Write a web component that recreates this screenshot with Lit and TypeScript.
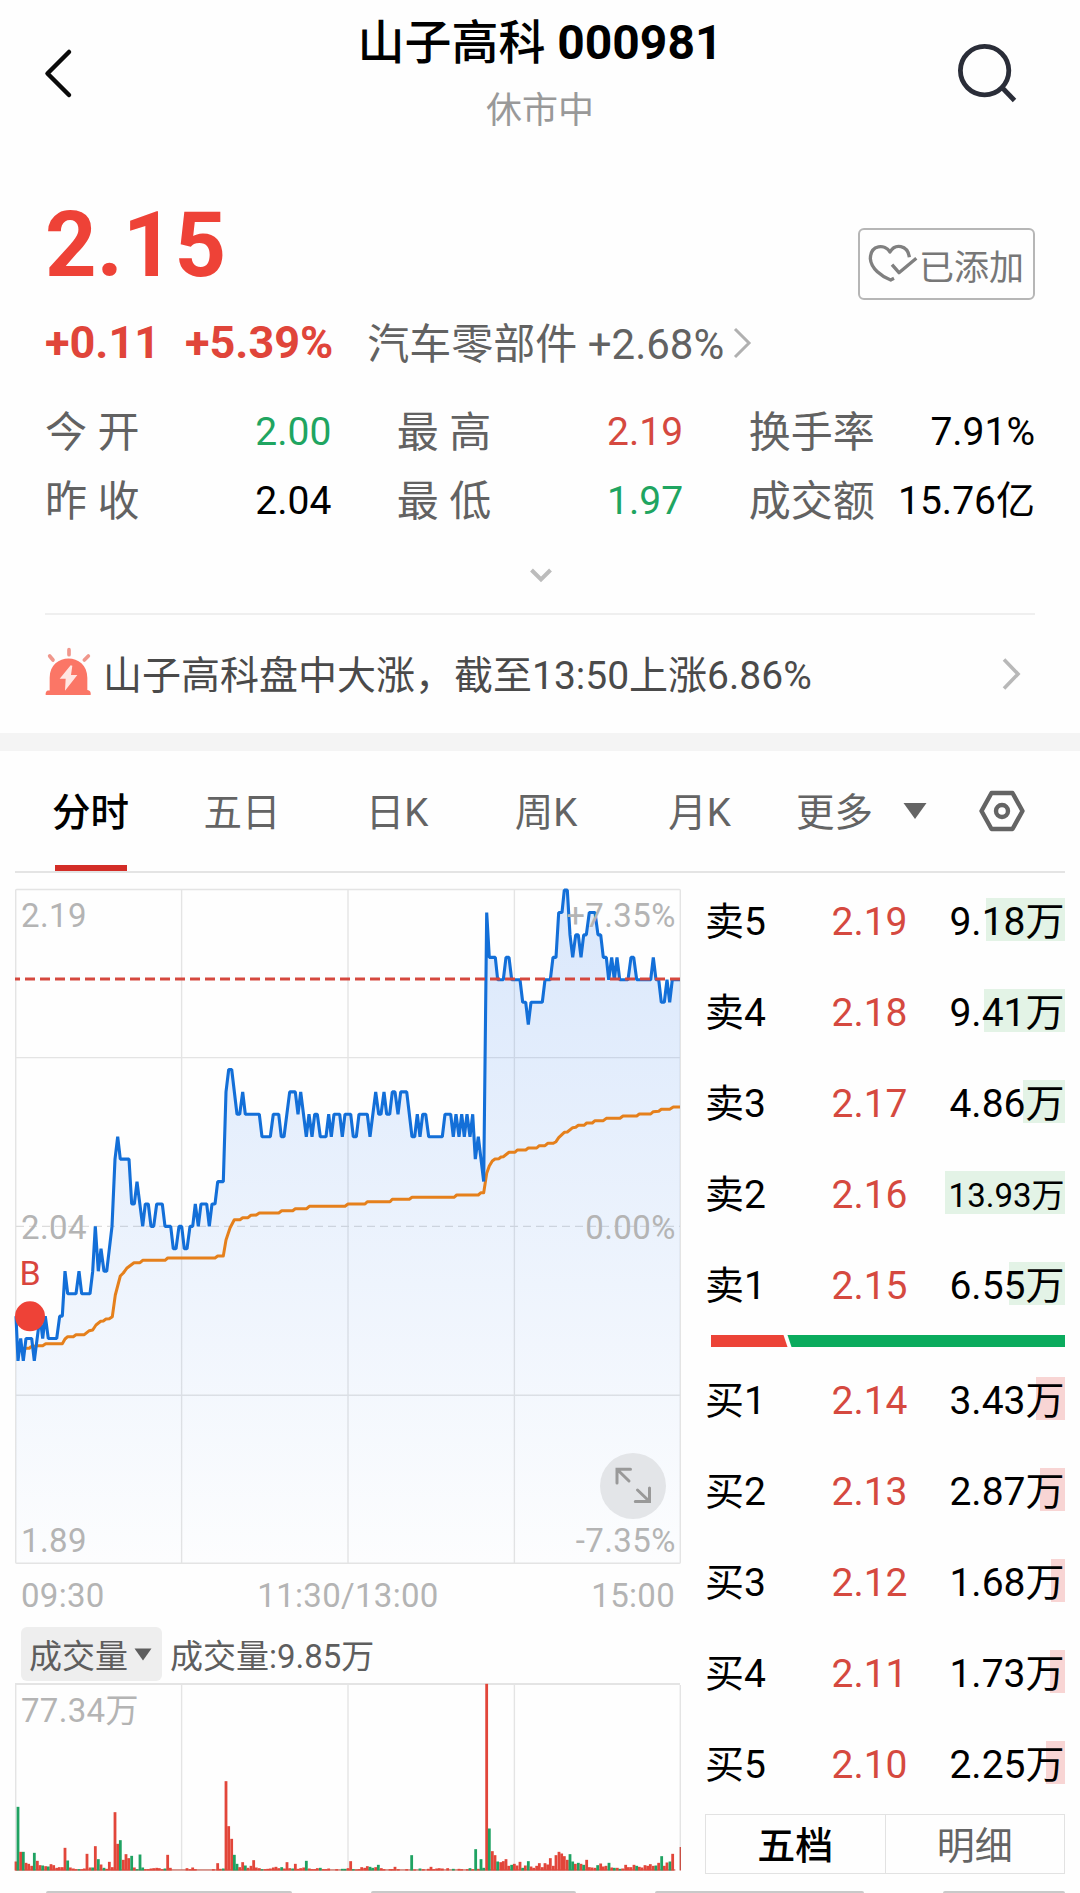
import { LitElement, html, svg, css } from "lit";
import { customElement, property } from "lit/decorators.js";

const FONT = css`Roboto, "Noto Sans CJK SC", sans-serif`;

/* Price track: [offset, price in cents]. One minute is 8.3 offset units. */
const PRICE: number[][] = [
  [48, 200], [54, 198], [62, 199], [70, 198], [78, 199], [95, 199], [103, 198], [120, 200], [128, 199], [136, 200],
  [145, 199], [170, 199], [179, 200], [187, 200], [195, 202], [203, 201], [228, 201], [237, 202], [245, 201],
  [270, 201], [278, 202], [286, 204], [295, 202], [303, 203], [312, 202], [320, 202], [336, 204], [345, 207],
  [353, 208], [361, 207], [387, 207], [395, 205], [403, 205], [411, 206], [428, 204], [436, 205], [445, 205],
  [453, 204], [461, 204], [470, 205], [487, 205], [495, 204], [512, 204], [520, 203], [528, 203], [537, 204],
  [545, 204], [553, 203], [561, 203], [570, 204], [578, 204], [586, 205], [595, 204], [603, 205], [620, 205],
  [628, 204], [636, 205], [645, 205], [653, 206], [670, 206], [678, 210], [686, 211], [695, 211], [711, 209],
  [719, 209], [728, 210], [736, 209], [778, 209], [786, 208], [811, 208], [820, 209], [836, 209], [844, 208],
  [852, 208], [869, 210], [886, 210], [894, 209], [902, 210], [919, 208], [927, 209], [936, 208], [944, 209],
  [952, 209], [961, 208], [978, 208], [986, 209], [994, 208], [1002, 209], [1019, 209], [1027, 208], [1035, 209],
  [1052, 209], [1060, 208], [1069, 208], [1077, 209], [1102, 209], [1110, 208], [1127, 210], [1136, 209],
  [1143, 209], [1152, 210], [1160, 209], [1169, 209], [1177, 210], [1185, 210], [1194, 209], [1202, 210],
  [1220, 210], [1236, 208], [1244, 208], [1252, 209], [1260, 208], [1268, 209], [1277, 209], [1286, 208],
  [1327, 208], [1335, 209], [1352, 209], [1360, 208], [1368, 209], [1377, 208], [1385, 209], [1393, 208],
  [1401, 209], [1410, 208], [1418, 209], [1426, 207], [1435, 208], [1443, 207], [1451, 206], [1460, 218],
  [1468, 216], [1486, 216], [1493, 215], [1510, 215], [1518, 216], [1527, 216], [1535, 215], [1560, 215],
  [1568, 214], [1577, 214], [1585, 213], [1593, 214], [1627, 214], [1635, 215], [1651, 215], [1659, 216],
  [1668, 216], [1676, 218], [1686, 218], [1693, 219], [1702, 219], [1710, 217], [1718, 216], [1727, 217],
  [1735, 217], [1743, 216], [1751, 217], [1759, 217], [1768, 218], [1785, 218], [1794, 217], [1802, 217],
  [1810, 216], [1819, 216], [1826, 215], [1835, 216], [1843, 215], [1851, 216], [1859, 215], [1884, 215],
  [1893, 216], [1901, 216], [1910, 215], [1952, 215], [1960, 216], [1968, 215], [1976, 215], [1984, 214],
  [1993, 214], [2001, 215], [2009, 214], [2017, 215], [2040, 215],
];

/* Average price track: [offset, depth], both in thirds of a pixel. */
const AVERAGE: number[][] = [
  [60, 1410], [78, 1405], [88, 1405], [93, 1400], [112, 1397], [128, 1397], [137, 1391], [187, 1391], [195, 1377], [203, 1370],
  [220, 1370], [228, 1364], [253, 1364], [268, 1352], [278, 1350], [288, 1335], [302, 1324], [310, 1323],
  [318, 1317], [328, 1316], [337, 1310], [346, 1245], [361, 1188], [370, 1179], [380, 1165], [402, 1148],
  [420, 1148], [428, 1141], [495, 1141], [503, 1134], [645, 1134], [653, 1128], [670, 1128], [678, 1080],
  [690, 1044], [703, 1019], [720, 1019], [728, 1013], [744, 1013], [752, 1006], [769, 1005], [778, 999],
  [836, 999], [845, 992], [878, 992], [886, 986], [920, 986], [928, 979], [1035, 979], [1044, 972], [1095, 972],
  [1102, 965], [1170, 965], [1177, 958], [1228, 958], [1236, 952], [1362, 952], [1370, 945], [1435, 945],
  [1443, 938], [1451, 938], [1460, 880], [1468, 858], [1477, 843], [1485, 837], [1497, 836], [1503, 831],
  [1510, 830], [1527, 817], [1545, 817], [1552, 810], [1577, 810], [1585, 804], [1610, 804], [1618, 797],
  [1635, 797], [1643, 790], [1660, 790], [1668, 785], [1676, 773], [1693, 757], [1702, 756], [1718, 743],
  [1727, 742], [1735, 736], [1752, 736], [1760, 729], [1777, 729], [1785, 722], [1810, 722], [1819, 715],
  [1860, 715], [1869, 708], [1910, 708], [1918, 702], [1952, 702], [1960, 695], [1976, 694], [1984, 688],
  [2009, 688], [2020, 681], [2040, 681],
];

/* Volume per minute: offset, height, r(ise) or g(reen fall). */
const VOLUME =
  "48 27r,54 191g,62 56r,70 56g,78 23r,86 20r,95 14r,103 53g,112 29r,120 16r,128 15g,137 13r,145 12g,153 19r,161 16r,170 8r,178 10r,187 10r,195 68r,203 30g,211 9r,220 6r,228 4r,237 4g,245 4r,253 6r,261 50r,270 9r,278 9g,286 73r,295 34g,303 18r,312 8g,320 5r,328 26r,337 10r,345 175r,353 80r,361 91g,370 32r,378 49r,386 37r,395 44g,403 9r,411 4g,420 48g,428 9g,436 4r,445 4r,453 6r,461 7r,470 8r,478 7r,487 4r,495 6g,503 47r,511 8r,561 7r,570 4r,578 9r,586 4r,640 4r,653 22r,661 5r,670 6g,678 268r,686 133r,695 95r,703 47g,711 20g,719 10r,728 25r,736 15g,744 8r,753 14r,761 31r,769 9r,778 7r,786 4g,795 4r,803 5r,811 6r,820 9r,828 11r,836 7r,845 10g,853 6r,861 25r,869 7r,878 6g,886 20r,894 5r,902 7r,911 9r,919 29g,928 6r,936 4r,944 4r,952 7r,961 8g,970 4r,978 4r,986 6r,1010 4r,1027 5g,1035 5g,1044 7r,1052 28r,1060 4g,1069 3r,1077 4r,1085 10r,1094 8r,1102 13r,1110 11g,1118 8g,1127 10r,1135 17g,1144 7r,1152 4r,1170 4r,1177 4r,1185 11r,1195 4r,1220 4r,1235 46g,1244 3r,1260 6g,1270 4r,1285 5r,1293 11r,1301 4r,1310 6r,1318 7r,1327 6r,1343 7r,1360 5g,1377 5r,1385 4r,1402 4r,1410 7g,1418 4r,1427 64g,1435 5r,1443 34g,1451 8g,1460 560r,1468 126g,1477 58r,1485 46r,1493 27g,1502 25r,1510 28r,1518 34r,1526 14r,1535 17g,1543 20r,1551 15r,1560 26r,1568 8g,1576 15r,1585 28g,1593 12r,1601 8r,1610 14r,1618 22r,1627 10r,1635 22r,1643 18r,1651 37r,1660 14r,1668 46r,1677 56r,1685 51r,1693 43r,1702 32r,1710 49g,1718 27g,1726 20r,1735 23g,1743 20r,1751 17g,1760 32r,1768 10r,1776 9r,1785 8r,1793 16g,1802 21r,1810 12r,1818 14r,1827 23g,1835 9r,1843 8g,1852 8r,1860 5g,1868 6r,1877 17r,1885 10r,1893 10r,1902 17r,1910 14g,1918 11r,1926 9r,1935 16r,1943 14r,1951 19r,1960 14r,1968 15g,1976 23r,1985 43g,1993 14r,2001 24r,2010 27g,2018 50r"
    .split(",")
    .map((s) => {
      const [x, rest] = s.split(" ");
      return { x: +x / 3, h: parseInt(rest) / 3, up: rest.endsWith("r") };
    });

@customElement("price-chart")
class PriceChart extends LitElement {
  static styles = css`
    :host { display: block; height: 703px; }
    svg { display: block; }
    text { font-family: ${FONT}; font-size: 33px; fill: #b4b4b4; letter-spacing: 0.4px; }
    .mark { fill: #d9453d; font-size: 34px; letter-spacing: 0; }
  `;
  render() {
    const line = PRICE.map(([x, c]) => `${(x / 3).toFixed(1)},${(1226.4 - (c - 204) * 22.42).toFixed(1)}`).join(" ");
    const avg = AVERAGE.map(([x, y]) => `${(x / 3).toFixed(1)},${(880 + y / 3).toFixed(1)}`).join(" ");
    return html`<svg width="690" height="703" viewBox="0 872 690 703">
      <defs>
        <linearGradient id="area" gradientUnits="userSpaceOnUse" x1="0" y1="890" x2="0" y2="1563">
          <stop offset="0" stop-color="#2f7df0" stop-opacity="0.175"></stop>
          <stop offset="1" stop-color="#2f7df0" stop-opacity="0.008"></stop>
        </linearGradient>
      </defs>
      <g stroke="#e4e4e4" stroke-width="1.4" fill="none">
        <rect x="15.7" y="889.5" width="664.6" height="673.7" rx="1"></rect>
        <path d="M181.6 890V1563M348 890V1563M514.4 890V1563M16 1057.6H680M16 1395.2H680"></path>
        <path stroke="#dcdcdc" stroke-dasharray="8 5" d="M16 1226.4H680"></path>
      </g>
      <polygon points="16,1563 ${line} 680,1563" fill="url(#area)"></polygon>
      <polyline points=${avg} fill="none" stroke="#e5801c" stroke-width="3" stroke-linejoin="round"></polyline>
      <polyline points=${line} fill="none" stroke="#136fd8" stroke-width="3.1" stroke-linejoin="bevel"></polyline>
      <path d="M15 979H680" stroke="#d5483e" stroke-width="3.2" stroke-dasharray="10 5" stroke-dashoffset="5"></path>
      <text x="21" y="926.9">2.19</text>
      <text x="21" y="1239.2">2.04</text>
      <text x="21" y="1552.2">1.89</text>
      <text x="675.8" y="926.9" text-anchor="end">+7.35%</text>
      <text x="675.8" y="1239.2" text-anchor="end">0.00%</text>
      <text x="675.8" y="1552.2" text-anchor="end">-7.35%</text>
      <text class="mark" x="19.5" y="1285.3">B</text>
      <circle cx="30" cy="1316.3" r="15" fill="#ee4237"></circle>
      <circle cx="633" cy="1486" r="33" fill="#e3e5e8"></circle>
      <path d="M630.5 1469.2H617V1483M617.5 1469.7L629 1481M635.3 1501.4H649.5V1488M649 1501L637.5 1490"
        fill="none" stroke="#999" stroke-width="3" stroke-linecap="round"></path>
    </svg>`;
  }
}

@customElement("volume-chart")
class VolumeChart extends LitElement {
  static styles = css`
    :host { display: block; height: 193px; }
    svg { display: block; }
    text { font-family: ${FONT}; font-size: 33px; fill: #b4b4b4; letter-spacing: 0.3px; }
  `;
  render() {
    return html`<svg width="690" height="193" viewBox="0 1682 690 193">
      <g stroke="#e4e4e4" fill="none">
        <path stroke-width="2" d="M15 1683.9H680"></path>
        <path stroke-width="1.4" d="M15.7 1685V1870M181.6 1685V1870M348 1685V1870M514.4 1685V1870M680.3 1685V1870"></path>
      </g>
      <rect x="15.3" y="1869.3" width="660" height="1.3" fill="#c4685c"></rect>
      ${VOLUME.map((v) => svg`<rect x=${v.x - 1.4} y=${1870.5 - v.h} width="2.8" height=${v.h} fill=${v.up ? "#e2463a" : "#1fa262"}></rect>`)}
      <rect x="679.6" y="1847" width="1.4" height="23.5" fill="#c84f44"></rect>
      <text x="21" y="1722">77.34万</text>
    </svg>`;
  }
}

@customElement("order-row")
class OrderRow extends LitElement {
  @property() label = "";
  @property() price = "";
  @property() volume = "";
  @property({ type: Number }) depth = 0;
  @property() side = "sell";
  static styles = css`
    :host { display: block; height: 91px; }
    .row {
      display: grid; grid-template-columns: 126.5px 1fr 120px; align-items: center; height: 91px;
      font: 39px/43px ${FONT}; color: #000;
    }
    .price { color: #d5493f; }
    .volume {
      height: 43px; text-align: right; white-space: nowrap; background-repeat: no-repeat;
      background-position: right; box-sizing: border-box; padding-right: 0.5px;
    }
    .small { font-size: 33px; }
    .sell { background-image: linear-gradient(#e3f3e6, #e3f3e6); }
    .buy { background-image: linear-gradient(#f8d5d4, #f8d5d4); }
    .text { position: relative; top: 3px; }
  `;
  render() {
    return html`<div class="row">
      <span class="text">${this.label}</span>
      <span class="text price">${this.price}</span>
      <span class="volume ${this.side} ${this.volume.length > 5 ? "small" : ""}" style="background-size:${this.depth}px 100%">
        <span class="text">${this.volume}</span>
      </span>
    </div>`;
  }
}

const SELLS: [string, string, string, number][] = [
  ["卖5", "2.19", "9.18万", 79], ["卖4", "2.18", "9.41万", 81], ["卖3", "2.17", "4.86万", 42],
  ["卖2", "2.16", "13.93万", 120], ["卖1", "2.15", "6.55万", 56.5],
];
const BUYS: [string, string, string, number][] = [
  ["买1", "2.14", "3.43万", 29.5], ["买2", "2.13", "2.87万", 25], ["买3", "2.12", "1.68万", 14.5],
  ["买4", "2.11", "1.73万", 15], ["买5", "2.10", "2.25万", 19.5],
];
const STATS = [
  ["今 开", "2.00", "fall"], ["最 高", "2.19", "rise"], ["换手率", "7.91%", ""],
  ["昨 收", "2.04", ""], ["最 低", "1.97", "fall"], ["成交额", "15.76亿", ""],
];

@customElement("app-root")
class AppRoot extends LitElement {
  static styles = css`
    :host { display: block; width: 1080px; height: 1893px; overflow: hidden; background: #fefefe; font-family: ${FONT}; color: #000; }
    svg { display: block; }
    .header { display: grid; grid-template-columns: 130px 1fr 130px; height: 200px; box-sizing: border-box; }
    .back { padding: 47px 0 0 40px; }
    .titles { text-align: center; padding-top: 18px; }
    .name { font-size: 47px; line-height: 50px; font-weight: 500; }
    .code { font-size: 48px; font-weight: 700; }
    .state { margin-top: 23px; font-size: 36px; line-height: 40px; color: #999; }
    .quote { padding: 0 45px; }
    .last { display: flex; justify-content: space-between; height: 117px; }
    .price { font-size: 90px; line-height: 91px; font-weight: 700; color: #ee4237; }
    .fav {
      display: flex; align-items: center; box-sizing: border-box; width: 177px; height: 72px; margin-top: 28px;
      border: 2.5px solid #b6b6b6; border-radius: 6px; padding-left: 8px; font-size: 35px; color: #777; white-space: nowrap;
    }
    .change { display: flex; align-items: center; height: 52px; font-size: 45px; line-height: 52px; font-weight: 700; color: #e0453a; white-space: nowrap; }
    .pct { margin-left: 25px; }
    .industry { margin-left: 34px; padding-top: 3px; font-size: 42px; font-weight: 400; color: #626262; }
    .go { margin-left: 9px; }
    .stats { display: grid; grid-template-columns: repeat(3, 1fr); column-gap: 65.5px; padding-top: 29px; }
    .stat { display: flex; justify-content: space-between; height: 69px; line-height: 69px; font-size: 39px; white-space: nowrap; }
    .label { font-size: 42px; color: #626262; }
    .fall { color: #1fa561; }
    .rise { color: #d5493f; }
    .more { display: flex; justify-content: center; align-items: center; height: 78.5px; padding: 2px 0 0 2px; box-sizing: border-box; border-bottom: 2px solid #efefef; }
    .alert { display: flex; align-items: center; height: 118.5px; font-size: 39px; color: #4a4a4a; white-space: nowrap; }
    .alert-text { flex: 1; margin-left: 10px; padding-bottom: 3px; }
    .bell { margin: -7px 1px 0 -1px; }
    .next { margin-right: 14px; }
    .band { height: 18px; background: #f4f4f4; }
    .tabs {
      display: grid; grid-template-columns: 151px 152px 158px 140px 167px 1fr; height: 122px; box-sizing: border-box;
      margin: 0 15px; border-bottom: 2px solid #e4e4e4; font-size: 38.5px; color: #646464; white-space: nowrap;
    }
    .tab { text-align: center; line-height: 124px; }
    .active { font-weight: 500; color: #000; display: flex; flex-direction: column; align-items: center; font-size: 38.5px; }
    .bar { width: 72px; height: 6px; flex: none; margin-top: -10px; background: #d32d27; }
    .extra { display: flex; align-items: center; line-height: 124px; padding-left: 13px; }
    .tri { margin: -4px 52px 0 30px; }
    .gear { margin-top: -4px; }
    .body { display: flex; height: 1019px; margin-top: -1px; }
    .left { width: 705px; }
    .times { display: flex; justify-content: space-between; width: 654px; padding-left: 21px; height: 42px; line-height: 42px; font-size: 33px; letter-spacing: 0.3px; color: #b4b4b4; }
    .volbar { display: flex; height: 65px; align-items: center; padding-left: 21px; font-size: 33px; color: #5e5e5e; }
    .pick { display: flex; align-items: center; gap: 6px; width: 141px; height: 54px; margin-top: 9px; padding-left: 8px; box-sizing: border-box; background: #eee; border-radius: 6px; white-space: nowrap; }
    .vol { margin: 9px 0 0 8px; }
    .right { width: 360px; padding-top: 2px; }
    .ratio { margin: 6px 0 6px 6px; }
    .modes { display: flex; height: 60px; margin-top: 6px; border: 1px solid #e2e2e2; box-sizing: border-box; font-size: 38px; line-height: 63px; text-align: center; color: #646464; }
    .mode { flex: 1; }
    .on { font-weight: 500; color: #000; border-right: 1px solid #e2e2e2; }
    .strip { display: flex; height: 2px; gap: 79px; padding-left: 46px; }
    .peek { width: 246px; background: #c9c9c9; border-radius: 4px 4px 0 0; }
    .p2 { width: 205px; }
    .p3 { width: 209px; }
    .p4 { width: 122px; }
  `;

  row = (side: string) => ([label, price, volume, depth]: [string, string, string, number]) =>
    html`<order-row .label=${label} .price=${price} .volume=${volume} .depth=${depth} .side=${side}></order-row>`;

  render() {
    return html`
      <div class="header">
        <div class="back">
          <svg width="36" height="54" viewBox="40 47 36 54"><path d="M69 52L47.5 73.5L69 95" fill="none" stroke="#0a0a0a" stroke-width="4.5" stroke-linecap="round" stroke-linejoin="round"></path></svg>
        </div>
        <div class="titles">
          <div class="name">山子高科 <span class="code">000981</span></div>
          <div class="state">休市中</div>
        </div>
        <div class="search">
          <svg width="80" height="120" viewBox="950 0 80 120"><circle cx="984.6" cy="70.6" r="24.2" fill="none" stroke="#2a2d38" stroke-width="4.8"></circle><path d="M1002 87.5L1014.5 100.5" stroke="#2a2d38" stroke-width="4.800"></path></svg>
        </div>
      </div>
      <div class="quote">
        <div class="last">
          <div class="price">2.15</div>
          <div class="fav">
            <svg width="51" height="48" viewBox="84 632 153 144">
              <path d="M208 684C203 646 165 642 150 668C135 644 92 644 91 688C93 718 125 742 152 752L162 747M156 706L177 730L229 687" fill="none" stroke="#808080" stroke-width="10" stroke-linejoin="round"></path>
            </svg>
            <span>已添加</span>
          </div>
        </div>
        <div class="change">
          <span>+0.11</span><span class="pct">+5.39%</span><span class="industry">汽车零部件 +2.68%</span>
          <svg class="go" width="20" height="32" viewBox="0 0 20 32"><path d="M2 2L16 16L2 30" fill="none" stroke="#b0b0b0" stroke-width="3"></path></svg>
        </div>
        <div class="stats">
          ${STATS.map(([l, v, c]) => html`<div class="stat"><span class="label">${l}</span><span class=${c}>${v}</span></div>`)}
        </div>
        <div class="more">
          <svg width="24" height="16" viewBox="0 0 24 16"><path d="M2.5 3L12 12.5L21.5 3" fill="none" stroke="#bcbcbc" stroke-width="4"></path></svg>
        </div>
        <div class="alert">
          <svg class="bell" width="48" height="50" viewBox="45 560 144 150">
            <g transform="translate(0,304)">
              <path d="M62 262L72 274M120 243V258M178 262L166 274" transform="translate(0,27)" stroke="#f0978c" stroke-width="11" stroke-linecap="round"></path>
              <path d="M62 393V353C62 276 175 276 175 353V390Q187 392 185 405H50Q48 391 62 391Z" transform="translate(0,1)" fill="#fb7666"></path>
              <path d="M125 317L92 357H110L108 393L145 346H126L130 318Z" fill="#ffe6e2"></path>
            </g>
          </svg>
          <span class="alert-text">山子高科盘中大涨，截至13:50上涨6.86%</span>
          <svg class="next" width="20" height="34" viewBox="0 0 20 34"><path d="M3 2.5L17 17L3 31.5" fill="none" stroke="#b8b8b8" stroke-width="3.6"></path></svg>
        </div>
      </div>
      <div class="band"></div>
      <div class="tabs">
        <div class="tab active"><span>分时</span><div class="bar"></div></div>
        <div class="tab">五日</div>
        <div class="tab">日K</div>
        <div class="tab">周K</div>
        <div class="tab">月K</div>
        <div class="extra">
          <span>更多</span>
          <svg class="tri" width="24" height="16" viewBox="0 0 24 16"><path d="M0.5 0H23.5L12 16Z" fill="#646464"></path></svg>
          <svg class="gear" width="46" height="42" viewBox="0 0 46 42"><path d="M12.5 3H33.5L43.5 21L33.5 39H12.5L2.5 21Z" fill="none" stroke="#646464" stroke-width="4.4" stroke-linejoin="round"></path><circle cx="23" cy="21" r="6" fill="none" stroke="#646464" stroke-width="4.4"></circle></svg>
        </div>
      </div>
      <div class="body">
        <div class="left">
          <price-chart></price-chart>
          <div class="times"><span>09:30</span><span>11:30/13:00</span><span>15:00</span></div>
          <div class="volbar">
            <div class="pick"><span>成交量</span><svg width="18" height="13" viewBox="0 0 18 13"><path d="M0.5 0.5H17.5L9 12.5Z" fill="#5e5e5e"></path></svg></div>
            <span class="vol">成交量:9.85万</span>
          </div>
          <volume-chart></volume-chart>
        </div>
        <div class="right">
          <div>${SELLS.map(this.row("sell"))}</div>
          <svg class="ratio" width="354" height="12" viewBox="0 0 354 12"><path d="M0 0H72.5L76.5 12H0Z" fill="#ec4337"></path><path d="M76.5 0H354V12H80.5Z" fill="#0aab5d"></path></svg>
          <div>${BUYS.map(this.row("buy"))}</div>
          <div class="modes"><div class="mode on">五档</div><div class="mode">明细</div></div>
        </div>
      </div>
      <div class="strip"><div class="peek"></div><div class="peek p2"></div><div class="peek p3"></div><div class="peek p4"></div></div>
    `;
  }
}
